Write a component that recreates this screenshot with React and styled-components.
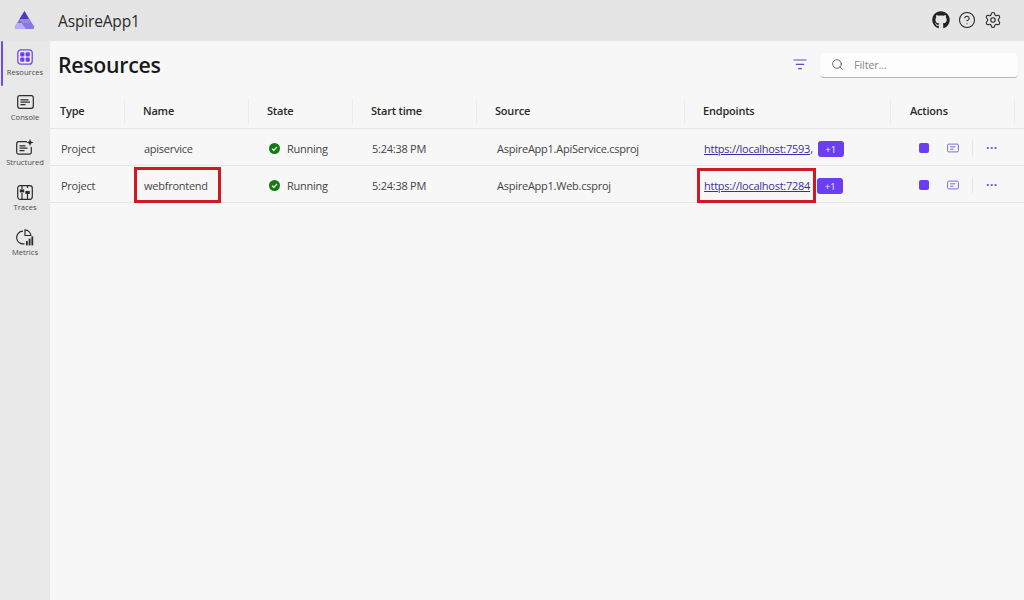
import styled, { createGlobalStyle } from 'styled-components'
import { FaGithub } from 'react-icons/fa'
import { CircleHelp, Settings, Search } from 'lucide-react'

const GlobalStyle = createGlobalStyle`
  html, body {
    margin: 0;
    padding: 0;
    height: 100%;
    background: #f7f7f7;
    font-family: "Open Sans", "Noto Sans", "Liberation Sans", sans-serif;
    color: #1d1d1d;
    overflow: hidden;
  }
  * { box-sizing: border-box; }
`

const Page = styled.div`
  width: 1024px;
  height: 600px;
  display: grid;
  grid-template-rows: 41px 1fr;
  grid-template-columns: 50px 974px;
`

const Header = styled.header`
  grid-column: 1 / 3;
  background: #e5e5e5;
  display: flex;
  align-items: center;
  padding: 0 22px 1px 14px;
`

const AppName = styled.div`
  margin-left: 23px;
  padding-top: 1px;
  font-size: 15.5px;
  letter-spacing: -0.15px;
  color: #2b2b2b;
`

const HeaderIcons = styled.div`
  margin-left: auto;
  display: flex;
  align-items: center;
  gap: 8px;
  color: #222;
`

const Sidebar = styled.nav`
  background: #e8e8e8;
  display: flex;
  flex-direction: column;
`

const NavItem = styled.div`
  position: relative;
  height: 45px;
  display: flex;
  flex-direction: column;
  align-items: center;
  padding-top: 8px;
  font-size: 7.6px;
  color: #4a4a4a;

  &::before {
    content: '';
    display: ${p => (p.$active ? 'block' : 'none')};
    position: absolute;
    left: 1px;
    top: 0;
    width: 2px;
    height: 45px;
    background: #6f4be8;
    border-radius: 1px;
  }
`

const NavIcon = styled.div`
  height: 16px;
  margin-bottom: 2px;
  display: flex;
  align-items: center;
  justify-content: center;
`

const Main = styled.main`
  background: #f7f7f7;
  display: flex;
  flex-direction: column;
`

const Toolbar = styled.div`
  height: 54px;
  display: flex;
  align-items: center;
  padding: 0 6px 8px 8px;
`

const Title = styled.h1`
  margin: 0;
  font-size: 21.3px;
  font-weight: 600;
  letter-spacing: -0.3px;
  color: #1a1a1a;
`

const FilterButton = styled.div`
  margin-left: auto;
  display: flex;
  align-items: center;
  margin-right: 13px;
`

const FilterBox = styled.div`
  width: 198px;
  height: 25px;
  margin-top: 2px;
  background: #fdfdfd;
  border-radius: 4px;
  border-bottom: 1px solid #b9b9b9;
  box-shadow: 0 0 1px rgba(0, 0, 0, 0.08);
  display: flex;
  align-items: center;
  gap: 10px;
  padding-left: 11px;
  font-size: 11px;
  letter-spacing: -0.2px;
  color: #8a8a8a;
`

const Row = styled.div`
  display: grid;
  grid-template-columns: 75px 124px 104px 124px 208px 206px 124px 9px;
  height: ${p => (p.$head ? '34px' : '37px')};
  border-bottom: 1px solid #e6e6e6;
`

const HeadCell = styled.div`
  position: relative;
  display: flex;
  align-items: center;
  padding: 0 0 2px ${p => p.$pad || 18}px;
  font-size: 11px;
  font-weight: 600;
  letter-spacing: -0.2px;
  color: #2a2a2a;

  &::after {
    content: '';
    position: absolute;
    right: 0;
    top: 4px;
    bottom: 4px;
    width: 1px;
    background: #ececec;
  }
`

const Cell = styled.div`
  position: relative;
  display: flex;
  align-items: center;
  padding: 2px 0 0 ${p => p.$pad || 19}px;
  font-size: 11px;
  letter-spacing: -0.25px;
  color: #444;
  white-space: nowrap;
`

const StatusDot = styled.svg`
  margin-right: 7px;
  flex: none;
`

const EndpointLink = styled.a`
  color: #3b2f9e;
  text-decoration: underline;
`

const CountBadge = styled.span`
  margin: 2px 0 0 ${p => (p.$tight ? 5 : 7)}px;
  width: 26px;
  height: 16px;
  background: #6b3ff0;
  color: #f2eeff;
  border-radius: 3px;
  font-size: 9.5px;
  letter-spacing: 0;
  display: inline-flex;
  align-items: center;
  justify-content: center;
`

const Highlight = styled.div`
  position: absolute;
  top: ${p => p.$top}px;
  bottom: -1px;
  left: ${p => p.$left}px;
  width: ${p => p.$width}px;
  border: 3px solid #cf1a24;
  pointer-events: none;
`

const ActionsCell = styled.div`
  display: flex;
  align-items: center;
  padding: 1px 0 0 28px;
`

const Stop = styled.span`
  width: 10px;
  height: 10px;
  border-radius: 2px;
  background: #6b3ff0;
`

const ConsoleSvg = styled.svg`
  margin-left: 18px;
`

const Divider = styled.span`
  width: 1px;
  height: 16px;
  background: #e6e6e6;
  margin: 0 13px;
`

const More = styled.span`
  color: #6b4fd8;
  font-size: 12px;
  font-weight: 700;
  line-height: 1;
  letter-spacing: 0.5px;
  margin-top: -5px;
`

const ConsoleLines = () => (
  <ConsoleSvg width="12" height="10" viewBox="0 0 20 16" fill="none" stroke="#7a63d8" strokeWidth="1.6">
    <rect x="1" y="1.5" width="18" height="13" rx="2" />
    <path d="M5 6h9M5 10h6" />
  </ConsoleSvg>
)

const LogoMark = () => (
  <svg width="21" height="20" viewBox="0 0 21 20">
    <path d="M10.5 1 L1 16.5 Q0.5 19 3 19 L18 19 Q20.5 19 20 16.5 Z" fill="#7c6ad6" />
    <path d="M10.5 1 L5.5 9 L14.8 9 Z" fill="#5535c8" />
    <path d="M5.5 9 L14.8 9 L17 13 L8 13 Z" fill="#9d8ee3" opacity="0.85" />
    <path d="M1 16.5 Q0.5 19 3 19 L12 19 L8 13 L3 13 Z" fill="#b9aeec" />
    <path d="M8 13 L17 13 L20 16.5 Q20.5 19 18 19 L12 19 Z" fill="#8b78dc" />
  </svg>
)

const ResourcesIcon = () => (
  <svg width="16" height="16" viewBox="0 0 16 16" fill="none">
    <rect x="0.8" y="0.8" width="14.4" height="14.4" rx="3" stroke="#6b4fd8" strokeWidth="1.3" fill="#efeaff" />
    <rect x="3.2" y="3.2" width="4.2" height="4.2" rx="1" fill="#6b3ff0" />
    <rect x="8.6" y="3.2" width="4.2" height="4.2" rx="1" fill="#6b3ff0" />
    <rect x="3.2" y="8.6" width="4.2" height="4.2" rx="1" fill="#6b3ff0" />
    <rect x="8.6" y="8.6" width="4.2" height="4.2" rx="1" fill="#6b3ff0" />
  </svg>
)

const ConsoleIcon = () => (
  <svg width="17" height="14" viewBox="0 0 17 14" fill="none" stroke="#2b2b2b" strokeWidth="1.2">
    <rect x="0.7" y="0.7" width="15.6" height="12.6" rx="2" />
    <path d="M3.5 4.8h8M3.5 7.2h9.5M3.5 9.6h5" />
  </svg>
)

const StructuredIcon = () => (
  <svg width="18" height="16" viewBox="0 0 18 16" fill="none" stroke="#2b2b2b" strokeWidth="1.2">
    <path d="M11 2.7H2.5a1.8 1.8 0 0 0-1.8 1.8v8.8a1.8 1.8 0 0 0 1.8 1.8h11a1.8 1.8 0 0 0 1.8-1.8V8" />
    <path d="M3.5 6.8h6M3.5 9.2h8M3.5 11.6h5" />
    <path d="M14 0l1 2.6L17.6 3.6 15 4.6 14 7.2 13 4.6 10.4 3.6 13 2.6z" fill="#2b2b2b" stroke="none" />
  </svg>
)

const TracesIcon = () => (
  <svg width="16" height="15" viewBox="0 0 16 15" fill="none" stroke="#2b2b2b" strokeWidth="1.2">
    <rect x="0.7" y="0.7" width="14.6" height="13.6" rx="2.5" />
    <path d="M5 1v3M5 8v6M10.5 1v2M10.5 9v5" />
    <rect x="2.8" y="4.4" width="4.4" height="3" fill="#2b2b2b" stroke="none" />
    <rect x="8.4" y="6" width="4.4" height="3" fill="#2b2b2b" stroke="none" />
  </svg>
)

const MetricsIcon = () => (
  <svg width="18" height="17" viewBox="0 0 18 17" fill="none" stroke="#2b2b2b" strokeWidth="1.2">
    <path d="M7 2.2a6.3 6.3 0 1 0 1.5 12.4" />
    <path d="M9 0.8a6.3 6.3 0 0 1 5.9 5.7H9z" />
    <rect x="10" y="12" width="1.8" height="4.4" fill="#2b2b2b" stroke="none" />
    <rect x="12.7" y="9.6" width="1.8" height="6.8" fill="#2b2b2b" stroke="none" />
    <rect x="15.4" y="7.4" width="1.8" height="9" fill="#2b2b2b" stroke="none" />
  </svg>
)

const Check = () => (
  <StatusDot width="11" height="11" viewBox="0 0 11 11">
    <circle cx="5.5" cy="5.5" r="5.5" fill="#107c10" />
    <path d="M3 5.7l1.8 1.8L8 4" fill="none" stroke="#fff" strokeWidth="1.2" />
  </StatusDot>
)

const FilterLines = () => (
  <svg width="14" height="11" viewBox="0 0 14 11" stroke="#5b45d8" strokeWidth="1.2">
    <path d="M0.5 1h13M2.8 5.3h8.4M5.2 9.7h3.6" />
  </svg>
)

const navItems = [
  { label: 'Resources', icon: <ResourcesIcon />, active: true },
  { label: 'Console', icon: <ConsoleIcon /> },
  { label: 'Structured', icon: <StructuredIcon /> },
  { label: 'Traces', icon: <TracesIcon /> },
  { label: 'Metrics', icon: <MetricsIcon /> },
]

const resources = [
  { name: 'apiservice', source: 'AspireApp1.ApiService.csproj', url: 'https://localhost:7593', comma: true },
  { name: 'webfrontend', source: 'AspireApp1.Web.csproj', url: 'https://localhost:7284', marked: true },
]

export default function App() {
  return (
    <Page>
      <GlobalStyle />
      <Header>
        <LogoMark />
        <AppName>AspireApp1</AppName>
        <HeaderIcons>
          <FaGithub size={18} />
          <CircleHelp size={18} strokeWidth={1.4} />
          <Settings size={18} strokeWidth={1.4} />
        </HeaderIcons>
      </Header>
      <Sidebar>
        {navItems.map(item => (
          <NavItem key={item.label} $active={item.active}>
            <NavIcon>{item.icon}</NavIcon>
            {item.label}
          </NavItem>
        ))}
      </Sidebar>
      <Main>
        <Toolbar>
          <Title>Resources</Title>
          <FilterButton>
            <FilterLines />
          </FilterButton>
          <FilterBox>
            <Search size={13} strokeWidth={1.4} color="#444" />
            Filter...
          </FilterBox>
        </Toolbar>
        <Row $head>
          <HeadCell $pad={10}>Type</HeadCell>
          <HeadCell>Name</HeadCell>
          <HeadCell>State</HeadCell>
          <HeadCell>Start time</HeadCell>
          <HeadCell>Source</HeadCell>
          <HeadCell>Endpoints</HeadCell>
          <HeadCell $pad={19}>Actions</HeadCell>
        </Row>
        {resources.map(r => (
          <Row key={r.name}>
            <Cell $pad={11}>Project</Cell>
            <Cell>
              {r.name}
              {r.marked && <Highlight $top={1} $left={9} $width={87} />}
            </Cell>
            <Cell $pad={20}>
              <Check />
              Running
            </Cell>
            <Cell>5:24:38 PM</Cell>
            <Cell $pad={20}>{r.source}</Cell>
            <Cell>
              <EndpointLink href="#">{r.url}</EndpointLink>
              {r.comma && ','}
              <CountBadge $tight={r.comma}>+1</CountBadge>
              {r.marked && <Highlight $top={2} $left={12} $width={119} />}
            </Cell>
            <ActionsCell>
              <Stop />
              <ConsoleLines />
              <Divider />
              <More>...</More>
            </ActionsCell>
          </Row>
        ))}
      </Main>
    </Page>
  )
}
